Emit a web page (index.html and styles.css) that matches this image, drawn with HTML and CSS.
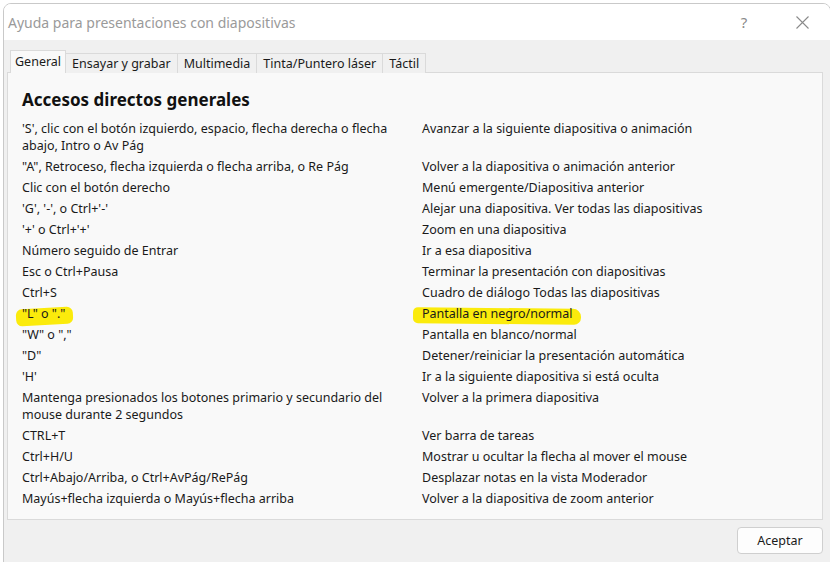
FILE: index.html
```html
<!DOCTYPE html>
<html lang="es">
    <head>
        <meta charset="UTF-8" />
        <meta name="viewport" content="width=device-width, initial-scale=1.0" />
        <title>Ayuda para presentaciones con diapositivas</title>
        <link rel="stylesheet" href="styles.css">
    </head>
    <body>
        <div class="window">
            <div class="titlebar">
                <span class="title">Ayuda para presentaciones con diapositivas</span>
                <span class="help">?</span>
                <span class="close">
                    <svg width="13" height="13" viewBox="0 0 13 13">
                        <path d="M0.5 0.5 L12.5 12.5 M12.5 0.5 L0.5 12.5" stroke="#8a8a8a" stroke-width="1.1" fill="none" />
                    </svg>
                </span>
            </div>

            <div class="body">
                <div class="tabs">
                    <span class="tab active">General</span>
                    <span class="tab">Ensayar y grabar</span>
                    <span class="tab">Multimedia</span>
                    <span class="tab">Tinta/Puntero láser</span>
                    <span class="tab">Táctil</span>
                </div>

                <div class="panel">
                    <h1>Accesos directos generales</h1>
                    <div class="keys">
                        <div>'S', clic con el botón izquierdo, espacio, flecha derecha o flecha abajo, Intro o Av Pág</div>
                        <div>Avanzar a la siguiente diapositiva o animación</div>

                        <div>"A", Retroceso, flecha izquierda o flecha arriba, o Re Pág</div>
                        <div>Volver a la diapositiva o animación anterior</div>

                        <div>Clic con el botón derecho</div>
                        <div>Menú emergente/Diapositiva anterior</div>

                        <div>'G', '-', o Ctrl+'-'</div>
                        <div>Alejar una diapositiva. Ver todas las diapositivas</div>

                        <div>'+' o Ctrl+'+'</div>
                        <div>Zoom en una diapositiva</div>

                        <div>Número seguido de Entrar</div>
                        <div>Ir a esa diapositiva</div>

                        <div>Esc o Ctrl+Pausa</div>
                        <div>Terminar la presentación con diapositivas</div>

                        <div>Ctrl+S</div>
                        <div>Cuadro de diálogo Todas las diapositivas</div>

                        <div><span class="mark mark-left">"L" o "."</span></div>
                        <div><span class="mark mark-right">Pantalla en negro/normal</span></div>

                        <div>"W" o ","</div>
                        <div>Pantalla en blanco/normal</div>

                        <div>"D"</div>
                        <div>Detener/reiniciar la presentación automática</div>

                        <div>'H'</div>
                        <div>Ir a la siguiente diapositiva si está oculta</div>

                        <div>Mantenga presionados los botones primario y secundario del mouse durante 2 segundos</div>
                        <div>Volver a la primera diapositiva</div>

                        <div>CTRL+T</div>
                        <div>Ver barra de tareas</div>

                        <div>Ctrl+H/U</div>
                        <div>Mostrar u ocultar la flecha al mover el mouse</div>

                        <div>Ctrl+Abajo/Arriba, o Ctrl+AvPág/RePág</div>
                        <div>Desplazar notas en la vista Moderador</div>

                        <div>Mayús+flecha izquierda o Mayús+flecha arriba</div>
                        <div>Volver a la diapositiva de zoom anterior</div>
                    </div>
                </div>

                <div class="footer">
                    <button class="btn">Aceptar</button>
                </div>
            </div>
        </div>
    </body>
</html>
```

FILE: styles.css
```css
body {
    margin: 0;
    background: #ffffff;
    font-family: "Noto Sans", "Open Sans", sans-serif;
    font-size: 12.5px;
    color: #1a1a1a;
}

.window {
    margin: 3px 0 0 3px;
    width: 826px;
    height: 570px;
    border: 1px solid #c9c9c9;
    border-radius: 8px 8px 0 0;
    overflow: hidden;
    display: flex;
    flex-direction: column;
}

.titlebar {
    height: 36px;
    background: #ffffff;
    display: flex;
    align-items: center;
    padding-left: 4px;
}
.title {
    flex: 1;
    font-size: 14px;
    color: #9a9a9a;
}
.help {
    font-size: 15px;
    color: #8a8a8a;
    width: 20px;
    text-align: center;
    margin-right: 25px;
}
.close {
    width: 46px;
    display: flex;
    justify-content: center;
    margin-right: 5px;
}

.body {
    flex: 1;
    background: #f0f0f0;
    padding: 11px 0 0 3px;
}

.tabs {
    display: flex;
    align-items: flex-end;
    padding-left: 3px;
    height: 22px;
    position: relative;
    z-index: 1;
}
.tab {
    height: 19px;
    line-height: 19px;
    padding: 0 6px;
    border: 1px solid #dadada;
    border-bottom: none;
    margin-left: -1px;
    background: #f0f0f0;
}
.tab.active {
    height: 22px;
    line-height: 22px;
    padding: 0 4px;
    background: #f9f9f9;
    margin-left: 0;
}

.panel {
    width: 800px;
    margin-top: -1px;
    border: 1px solid #dadada;
    background: #f9f9f9;
    padding: 15px 0 12px 14px;
}

h1 {
    margin: 0 0 8px;
    font-size: 17px;
    line-height: 24px;
    font-weight: bold;
    color: #111;
}

.keys {
    display: grid;
    grid-template-columns: 400px 1fr;
    row-gap: 4px;
    line-height: 17px;
}
.keys > div:nth-child(odd) {
    padding-right: 10px;
}

/* marcador amarillo hecho a mano */
.mark {
    position: relative;
    display: inline-block;
    z-index: 0;
}
.mark::before {
    content: "";
    position: absolute;
    z-index: -1;
    background: #fbeb0c;
    border-radius: 6px;
}
.mark-left::before {
    left: -6px;
    right: -8px;
    top: 3px;
    bottom: -3px;
    transform: rotate(-3deg);
}
.mark-right::before {
    left: -9px;
    right: -8px;
    top: 3px;
    bottom: -2px;
    border-radius: 5px 8px 7px 5px;
    transform: rotate(0.6deg);
}

.footer {
    display: flex;
    justify-content: flex-end;
    padding: 7px 7px 0 0;
}
.btn {
    width: 86px;
    height: 27px;
    border: 1px solid #cfcfcf;
    border-radius: 4px;
    background: #fdfdfd;
    font-family: inherit;
    font-size: 12.5px;
    color: #1a1a1a;
}
```
